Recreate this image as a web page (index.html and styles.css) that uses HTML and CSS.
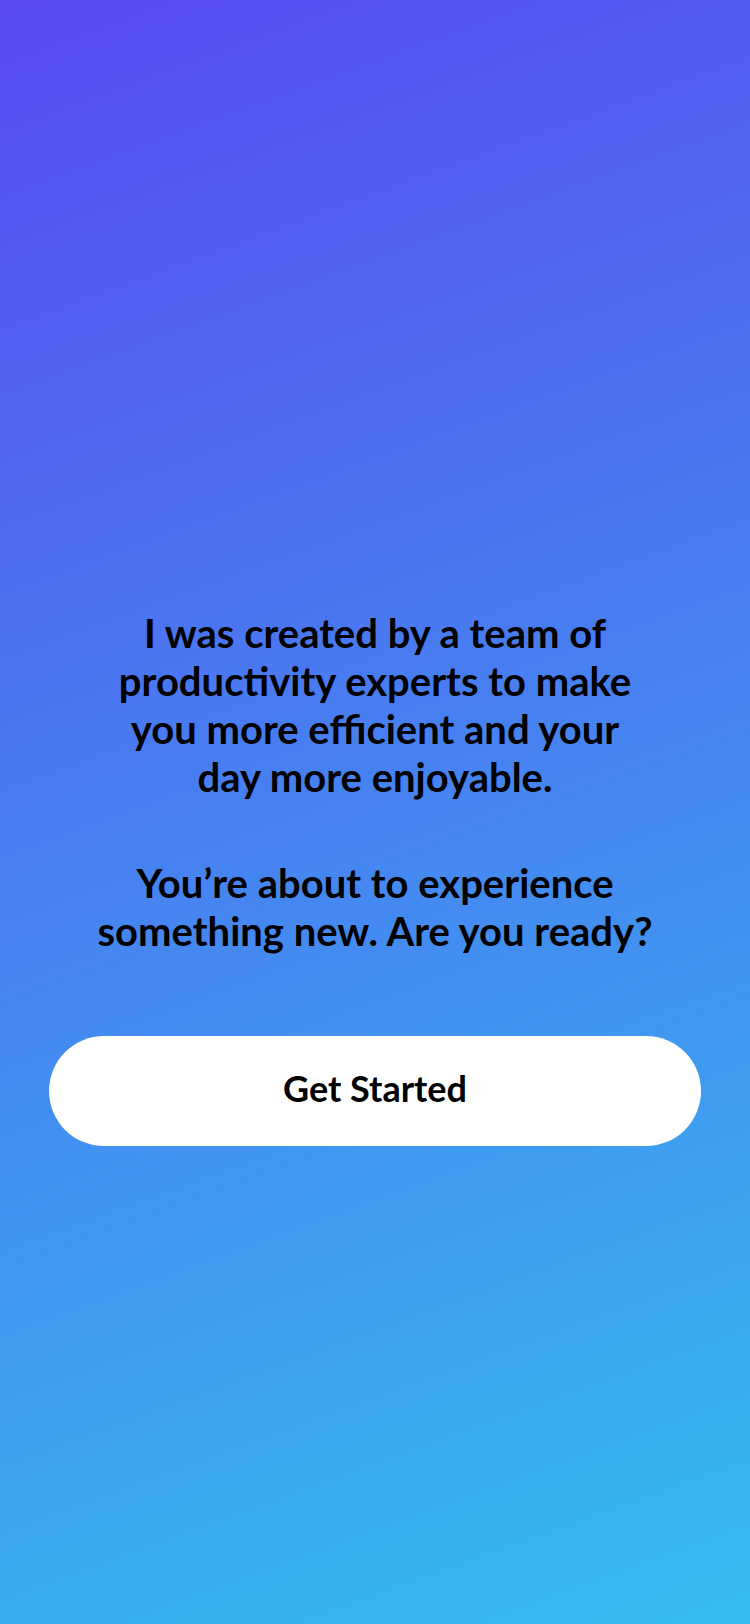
FILE: index.html
```html
<!DOCTYPE html>
<html lang="en">
<head>
<meta charset="utf-8">
<title>Welcome</title>
<link rel="stylesheet" href="styles.css">
</head>
<body>
<main class="screen">
  <section class="intro">
    <p class="intro-text">I was created by a team of produc&zwnj;tivity experts to make you more efficient and your day more enjoyable.</p>
    <p class="intro-text intro-question">You’re about to experience something new. Are you ready?</p>
  </section>
  <button class="start-btn" type="button">Get Started</button>
</main>
</body>
</html>
```
FILE: styles.css
```css
html, body {
  margin: 0;
  padding: 0;
}
body {
  width: 750px;
  height: 1624px;
  overflow: hidden;
  font-family: Lato, "Open Sans", sans-serif;
}
.screen {
  box-sizing: border-box;
  width: 750px;
  height: 1624px;
  background: linear-gradient(160deg, #584af2 0%, #34bdf0 100%);
  display: flex;
  flex-direction: column;
  align-items: center;
  padding-top: 609px;
}
.intro {
  width: 556px;
  display: flex;
  flex-direction: column;
  gap: 58px;
}
.intro-text {
  margin: 0;
  font-size: 40px;
  font-weight: 700;
  line-height: 48px;
  text-align: center;
  color: #000;
}
.start-btn {
  box-sizing: border-box;
  margin-top: 81px;
  width: 652px;
  height: 110px;
  padding: 0 0 6px;
  border: none;
  border-radius: 55px;
  background: #fff;
  color: #000;
  font-family: Lato, "Open Sans", sans-serif;
  font-weight: 700;
  font-size: 36px;
  cursor: pointer;
}
```
